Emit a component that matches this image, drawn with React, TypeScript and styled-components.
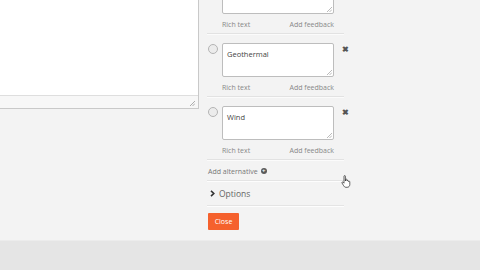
import React from "react";
import styled, { createGlobalStyle } from "styled-components";

const GlobalStyle = createGlobalStyle`
    html, body {
        margin: 0;
        padding: 0;
        background: #f3f3f3;
        font-family: "Open Sans", "Liberation Sans", sans-serif;
        overflow: hidden;
    }
`

const Page = styled.div`
    width: 480px;
    height: 270px;
    display: flex;
    flex-direction: column;
    position: relative;
    overflow: hidden;
`

const Main = styled.div`
    height: 240px;
    display: flex;
    gap: 8px;
    align-items: flex-start;
    background: #f3f3f3;
`

const Footer = styled.div`
    flex: 1;
    background: #e5e5e5;
    border-top: 1px solid #ececec;
`

const Editor = styled.div`
    width: 198px;
    height: 108px;
    background: #fff;
    border-right: 1px solid #c9c9c9;
    border-bottom: 1px solid #c9c9c9;
    display: flex;
    flex-direction: column;
`

const EditorBody = styled.div`
    flex: 1;
`

const StatusBar = styled.div`
    height: 10px;
    border-top: 1px solid #dedede;
    background: #f7f7f7;
    display: flex;
    justify-content: flex-end;
    align-items: flex-end;
    padding: 0 3px 2px 0;
`

const Column = styled.div`
    width: 137px;
    margin-top: -29px;
    display: flex;
    flex-direction: column;
`

const Item = styled.div<{ $indent?: boolean }>`
    padding: 9px 0 3px ${p => (p.$indent ? "15px" : "1px")};
    border-bottom: 1px solid #e2e2e2;
    box-shadow: 0 1px 0 #fbfbfb;
`

const Row = styled.div`
    display: flex;
    align-items: flex-start;
`

const Radio = styled.span`
    width: 8px;
    height: 8px;
    border-radius: 50%;
    border: 1px solid #b4b4b4;
    background: #ececec;
    margin-top: 1px;
    flex-shrink: 0;
`

const TextBox = styled.div<{ $flush?: boolean }>`
    width: 112px;
    height: 34px;
    flex-shrink: 0;
    margin-left: ${p => (p.$flush ? "0" : "4px")};
    background: #fff;
    border: 1px solid #bdbdbd;
    border-radius: 2px;
    position: relative;
    font-size: 7.5px;
    color: #444;
    padding: 0 4px;
    box-sizing: border-box;
    line-height: 20px;
`

const Grip = styled.svg`
    position: absolute;
    right: 1px;
    bottom: 1px;
`

const Remove = styled.span`
    margin-left: 8px;
    margin-top: 2px;
    font-size: 8px;
    line-height: 8px;
    color: #555;
    font-weight: bold;
    flex-shrink: 0;
`

const Meta = styled.div<{ $flush?: boolean }>`
    width: 112px;
    margin: 4px 0 0 ${p => (p.$flush ? "0" : "14px")};
    height: 12px;
    display: flex;
    justify-content: space-between;
    align-items: center;
    font-size: 7px;
    color: #888;
`

const AddRow = styled.div`
    height: 14px;
    margin-top: 4px;
    display: flex;
    align-items: center;
    gap: 3px;
    font-size: 7px;
    color: #777;
    padding-left: 1px;
    border-bottom: 1px solid #e4e4e4;
    box-shadow: 0 1px 0 #fdfdfd;
    padding-bottom: 2px;
`

const AddIcon = styled.span`
    width: 6px;
    height: 6px;
    border-radius: 50%;
    background: #5a5a5a;
    color: #fff;
    font-size: 6px;
    line-height: 6px;
    font-weight: bold;
    text-align: center;
`

const Options = styled.div`
    height: 23px;
    display: flex;
    align-items: center;
    gap: 4px;
    padding: 1px 0 0 3px;
    font-size: 8.5px;
    color: #666;
    border-bottom: 1px solid #e4e4e4;
    box-shadow: 0 1px 0 #fdfdfd;
`

const CloseButton = styled.button`
    margin: 7px 0 0 1px;
    width: 31px;
    height: 17px;
    padding: 0;
    border: none;
    border-radius: 1px;
    background: #f5612d;
    color: #fff;
    font-family: "Open Sans", "Liberation Sans", sans-serif;
    font-size: 7px;
    align-self: flex-start;
`

const Cursor = styled.svg`
    position: absolute;
    left: 341px;
    top: 175px;
`

function ResizeGrip() {
    return (
        <Grip width="5" height="5" viewBox="0 0 5 5">
            <path d="M5 0 L0 5 M5 2.5 L2.5 5" stroke="#aaa" strokeWidth="0.8" />
        </Grip>
    )
}

function Alternative({ text }: { text: string }) {
    return (
        <Item>
            <Row>
                <Radio />
                <TextBox>
                    {text}
                    <ResizeGrip />
                </TextBox>
                <Remove>✖</Remove>
            </Row>
            <Meta>
                <span>Rich text</span>
                <span>Add feedback</span>
            </Meta>
        </Item>
    )
}

function App() {
    return (
        <Page>
            <GlobalStyle />
            <Main>
                <Editor>
                    <EditorBody />
                    <StatusBar>
                        <svg width="5" height="5" viewBox="0 0 5 5">
                            <path d="M5 0 L0 5 M5 2.5 L2.5 5" stroke="#999" strokeWidth="0.8" />
                        </svg>
                    </StatusBar>
                </Editor>
                <Column>
                    <Item $indent>
                        <Row>
                            <TextBox $flush>
                                <ResizeGrip />
                            </TextBox>
                        </Row>
                        <Meta $flush>
                            <span>Rich text</span>
                            <span>Add feedback</span>
                        </Meta>
                    </Item>
                    <Alternative text="Geothermal" />
                    <Alternative text="Wind" />
                    <AddRow>
                        Add alternative <AddIcon>+</AddIcon>
                    </AddRow>
                    <Options>
                        <svg width="5" height="7" viewBox="0 0 5 7">
                            <path d="M1 0.8 L3.8 3.5 L1 6.2" fill="none" stroke="#333" strokeWidth="1.6" />
                        </svg>
                        Options
                    </Options>
                    <CloseButton>Close</CloseButton>
                </Column>
            </Main>
            <Footer />
            <Cursor width="11" height="13" viewBox="0 0 11 13">
                <path
                    d="M3 1.2 C3 0.4 4.4 0.4 4.4 1.2 L4.4 6 L4.6 4.6 C4.7 3.9 6 3.9 6 4.7 L6 6 C6.1 5.3 7.4 5.3 7.4 6.1 L7.4 6.6 C7.6 6 8.8 6.1 8.8 6.8 L8.8 9.5 C8.8 11 7.8 12.3 6.2 12.3 L5 12.3 C3.8 12.3 3.2 11.6 2.6 10.6 L1 8 C0.6 7.3 1.5 6.6 2.1 7.2 L3 8.2 Z"
                    fill="#fff"
                    stroke="#222"
                    strokeWidth="0.7"
                />
            </Cursor>
        </Page>
    )
}

export default App;
